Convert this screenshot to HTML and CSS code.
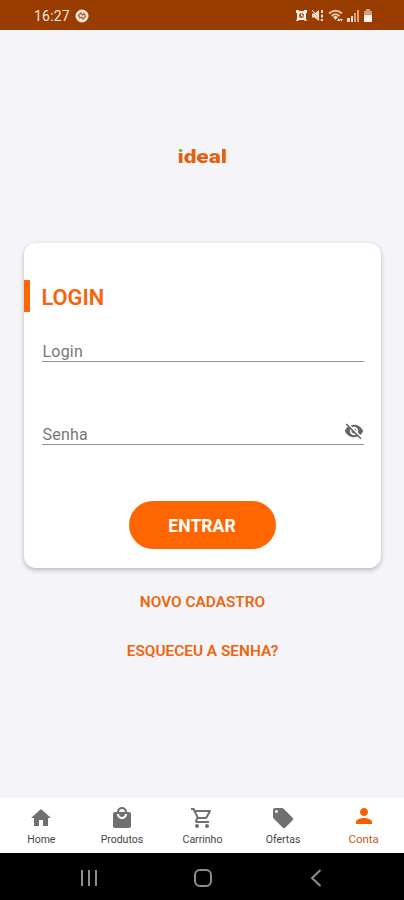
FILE: index.html
```html
<!DOCTYPE html>
<html lang="pt-BR">
<head>
<meta charset="utf-8">
<title>Login</title>
<link rel="stylesheet" href="styles.css">
</head>
<body>
<div class="app">
  <header class="status">
    <span class="clock">16:27</span>
    <svg class="notice" width="14" height="14" viewBox="0 0 14 14"><circle cx="7" cy="7" r="6.5" fill="#f8e5d8"/><path d="M3.5 6.5 6 4l1.5 2L9 4.5l1.5 2.8L8 10 6.5 8 5 9z" fill="none" stroke="#a95a2c" stroke-width="1.2"/></svg>
    <div class="status-icons">
      <svg width="13" height="13" viewBox="0 0 13 13"><path d="M1 1h3v1h5V1h3v3h-1v6l1 2h-2l-1-1H4l-1 1H1l1-2V4H1z" fill="#fff0e5"/><circle cx="6.500" cy="6.500" r="2.500" fill="#a34d18"/><path d="M6.500 4.500V7H8.500" fill="none" stroke="#fff0e5"/></svg>
      <svg width="13" height="13" viewBox="0 0 13 13"><path d="M1 4.500h2.500L8 1v11L3.500 8.500H1zM10 1h2v3h-2zM10 5.500h2v3h-2zM10 10h2v2h-2z" fill="#f6dfcf"/><path d="m1 1 9 11" stroke="#b97043" stroke-width="1"/><path d="m1 1 7 8" stroke="#f6dfcf" stroke-width="1"/></svg>
      <svg class="wifi" width="16" height="14" viewBox="0 0 16 14"><path d="M1 4.500Q7.500-1 14 4.500M3.500 7Q7.500 3.500 11.500 7" fill="none" stroke="#e8c0a4" stroke-width="2"/><path d="M5 8q2.500-2 5 0l-2.500 3z" fill="#f6dfcf"/><path d="m9 12 2-3 1.500 3zm3-2h3l-1.500 2.500z" fill="#f6dfcf"/></svg>
      <svg width="13" height="13" viewBox="0 0 13 13"><path d="M0 9h3v4H0zM4 7h2v6H4z" fill="#f3d6c2"/><path d="M7 4h2v9H7zM10 1h2v12h-2z" fill="#d9a27f"/></svg>
      <svg class="battery" width="10" height="13" viewBox="0 0 10 13"><path d="M3 0h4v2h2v4H1V2h2z" fill="#d7a17f"/><path d="M1 6h8v6q0 1-1 1H2q-1 0-1-1z" fill="#fff4eb"/></svg>
    </div>
  </header>
  <main>
    <div class="brand"><span class="brand-i">i</span>deal</div>
    <form class="card">
      <h1>LOGIN</h1>
      <div class="field first"><span>Login</span></div>
      <div class="field second"><span>Senha</span>
        <svg width="20" height="20" viewBox="0 0 24 24" fill="#666"><path d="M12 7c2.760 0 5 2.240 5 5 0 .650-.130 1.260-.360 1.830l2.920 2.920c1.510-1.260 2.700-2.890 3.430-4.750-1.730-4.390-6-7.500-11-7.500-1.400 0-2.740.250-3.980.700l2.160 2.160C10.740 7.130 11.350 7 12 7zM2 4.270l2.280 2.280.460.460C3.080 8.300 1.780 10.020 1 12c1.730 4.390 6 7.500 11 7.500 1.550 0 3.030-.300 4.380-.840l.420.420L19.730 22 21 20.730 3.270 3 2 4.270zM7.530 9.800l1.550 1.550c-.050.210-.080.430-.080.650 0 1.660 1.340 3 3 3 .220 0 .440-.030.650-.080l1.550 1.550c-.670.330-1.410.530-2.200.530-2.760 0-5-2.240-5-5 0-.790.200-1.530.530-2.200zm4.310-.780 3.150 3.150.020-.160c0-1.660-1.340-3-3-3l-.170.010z"/></svg>
      </div>
      <button type="button">ENTRAR</button>
    </form>
    <a class="link signup">NOVO CADASTRO</a>
    <a class="link forgot">ESQUECEU A SENHA?</a>
  </main>
  <nav class="tabs">
    <a><svg viewBox="0 0 24 24"><path d="M10 20v-6h4v6h5v-8h3L12 3 2 12h3v8z"/></svg><span>Home</span></a>
    <a><svg viewBox="0 0 24 24"><path d="M19 6h-2c0-2.760-2.240-5-5-5S7 3.240 7 6H5c-1.100 0-2 .900-2 2v12c0 1.100.900 2 2 2h14c1.100 0 2-.900 2-2V8c0-1.100-.900-2-2-2zm-7-3c1.660 0 3 1.340 3 3H9c0-1.660 1.340-3 3-3zm0 10c-2.760 0-5-2.240-5-5h2c0 1.660 1.340 3 3 3s3-1.340 3-3h2c0 2.760-2.240 5-5 5z"/></svg><span>Produtos</span></a>
    <a><svg viewBox="0 0 24 24"><path d="M15.550 13c.750 0 1.410-.410 1.750-1.030l3.580-6.490C21.250 4.820 20.770 4 20.010 4H5.210l-.940-2H1v2h2l3.600 7.590-1.350 2.440C4.520 15.370 5.480 17 7 17h12v-2H7l1.100-2h7.450zM6.160 6h12.150l-2.760 5H8.530L6.160 6zM7 18c-1.100 0-1.990.900-1.990 2S5.900 22 7 22s2-.900 2-2-.900-2-2-2zm10 0c-1.100 0-1.990.900-1.990 2s.890 2 1.990 2 2-.900 2-2-.900-2-2-2z"/></svg><span>Carrinho</span></a>
    <a><svg viewBox="0 0 24 24"><path d="m21.410 11.580-9-9C12.050 2.220 11.550 2 11 2H4c-1.100 0-2 .900-2 2v7c0 .550.220 1.050.590 1.420l9 9c.360.360.860.580 1.410.580s1.050-.220 1.410-.590l7-7c.370-.360.590-.860.590-1.410s-.230-1.060-.590-1.420zM5.500 7C4.670 7 4 6.330 4 5.500S4.670 4 5.500 4 7 4.670 7 5.500 6.330 7 5.500 7z"/></svg><span>Ofertas</span></a>
    <a class="active"><svg viewBox="0 0 24 24"><path d="M12 12c2.210 0 4-1.790 4-4s-1.790-4-4-4-4 1.790-4 4 1.790 4 4 4zm0 2c-2.670 0-8 1.340-8 4v2h16v-2c0-2.660-5.330-4-8-4z"/></svg><span>Conta</span></a>
  </nav>
  <footer class="system">
    <svg width="18" height="18" viewBox="0 0 18 18"><path d="M2 1v16M9 1v16M16 1v16"/></svg>
    <svg width="20" height="20" viewBox="0 0 20 20"><rect x="2" y="2" width="16" height="16" rx="5"/></svg>
    <svg width="18" height="18" viewBox="0 0 18 18"><path d="m13.500 1-8.500 8 8.500 8"/></svg>
  </footer>
</div>
</body>
</html>
```
FILE: styles.css
```css
* { box-sizing: border-box; }
body { margin: 0; font-family: Roboto, "Liberation Sans", sans-serif; }
.app { width: 404px; height: 900px; display: flex; flex-direction: column; background: #f4f4f9; overflow: hidden; }
.status { height: 30px; flex: none; background: #983c00; display: flex; align-items: center; padding: 1px 31px 0 34px; }
.clock { color: #f8e5d8; font-size: 14px; line-height: 16px; letter-spacing: .2px; width: 41px; }
.status-icons { margin-left: auto; display: flex; align-items: center; gap: 3px; }
.wifi { margin-left: 1px; }
main { flex: 1; display: flex; flex-direction: column; align-items: center; }
.brand { margin: 117px 0 0 1px; height: 20px; font: 900 17.500px/20px Roboto, sans-serif; color: #e4620f; transform: scaleX(1.290); }
.brand-i { background: linear-gradient(#7fb52d 0 5px, #e4620f 7px); background-clip: text; -webkit-background-clip: text; color: transparent; }
.card { width: 357px; height: 325px; margin-top: 76px; background: #fff; border-radius: 12px; box-shadow: 0 2px 5px rgba(0,0,0,.25); display: flex; flex-direction: column; padding-top: 37px; }
h1 { margin: 0; height: 32px; border-left: 6px solid #ff6600; padding-left: 12px; font-size: 21.800px; line-height: 35px; font-weight: 600; color: #f7640c; }
.field { margin: 0 17px 0 18px; height: 26px; border-bottom: 1px solid #929292; color: #777; font-size: 16px; line-height: 22px; padding-left: 1px; display: flex; justify-content: space-between; letter-spacing: .2px; }
.field span { padding-top: 4px; line-height: 23px; }
.field.first { margin-top: 24px; }
.field.second { margin-top: 57px; }
.field svg { margin-top: 2px; }
button { align-self: center; margin-top: 56px; width: 147px; height: 48px; border: 0; border-radius: 24px; background: #ff6600; color: #fff; font: 700 17.600px/50px Roboto, sans-serif; padding: 0; }
.link { margin-left: 1px; font-size: 15.400px; line-height: 20px; font-weight: 600; color: #ef650f; }
.signup { margin-top: 24px; }
.forgot { margin-top: 29px; }
.tabs { height: 55px; flex: none; background: #fff; display: flex; padding-left: 1px; }
.tabs a { flex: 1; display: flex; flex-direction: column; align-items: center; padding-top: 8px; color: #444; font-size: 10.500px; line-height: 14px; }
.tabs svg { width: 24px; height: 24px; fill: #707070; flex: none; }
.tabs span { margin-top: 3px; }
.tabs .active { color: #c15c22; padding-top: 6px; font-size: 11.500px; }
.tabs .active span { margin-top: 4px; }
.tabs .active svg { fill: #f46000; }
.system { height: 47px; flex: none; background: #000; display: flex; align-items: center; padding: 3px 79px 0 80px; justify-content: space-between; }
.system svg { fill: none; stroke: #8e8e8e; stroke-width: 2; }
```
